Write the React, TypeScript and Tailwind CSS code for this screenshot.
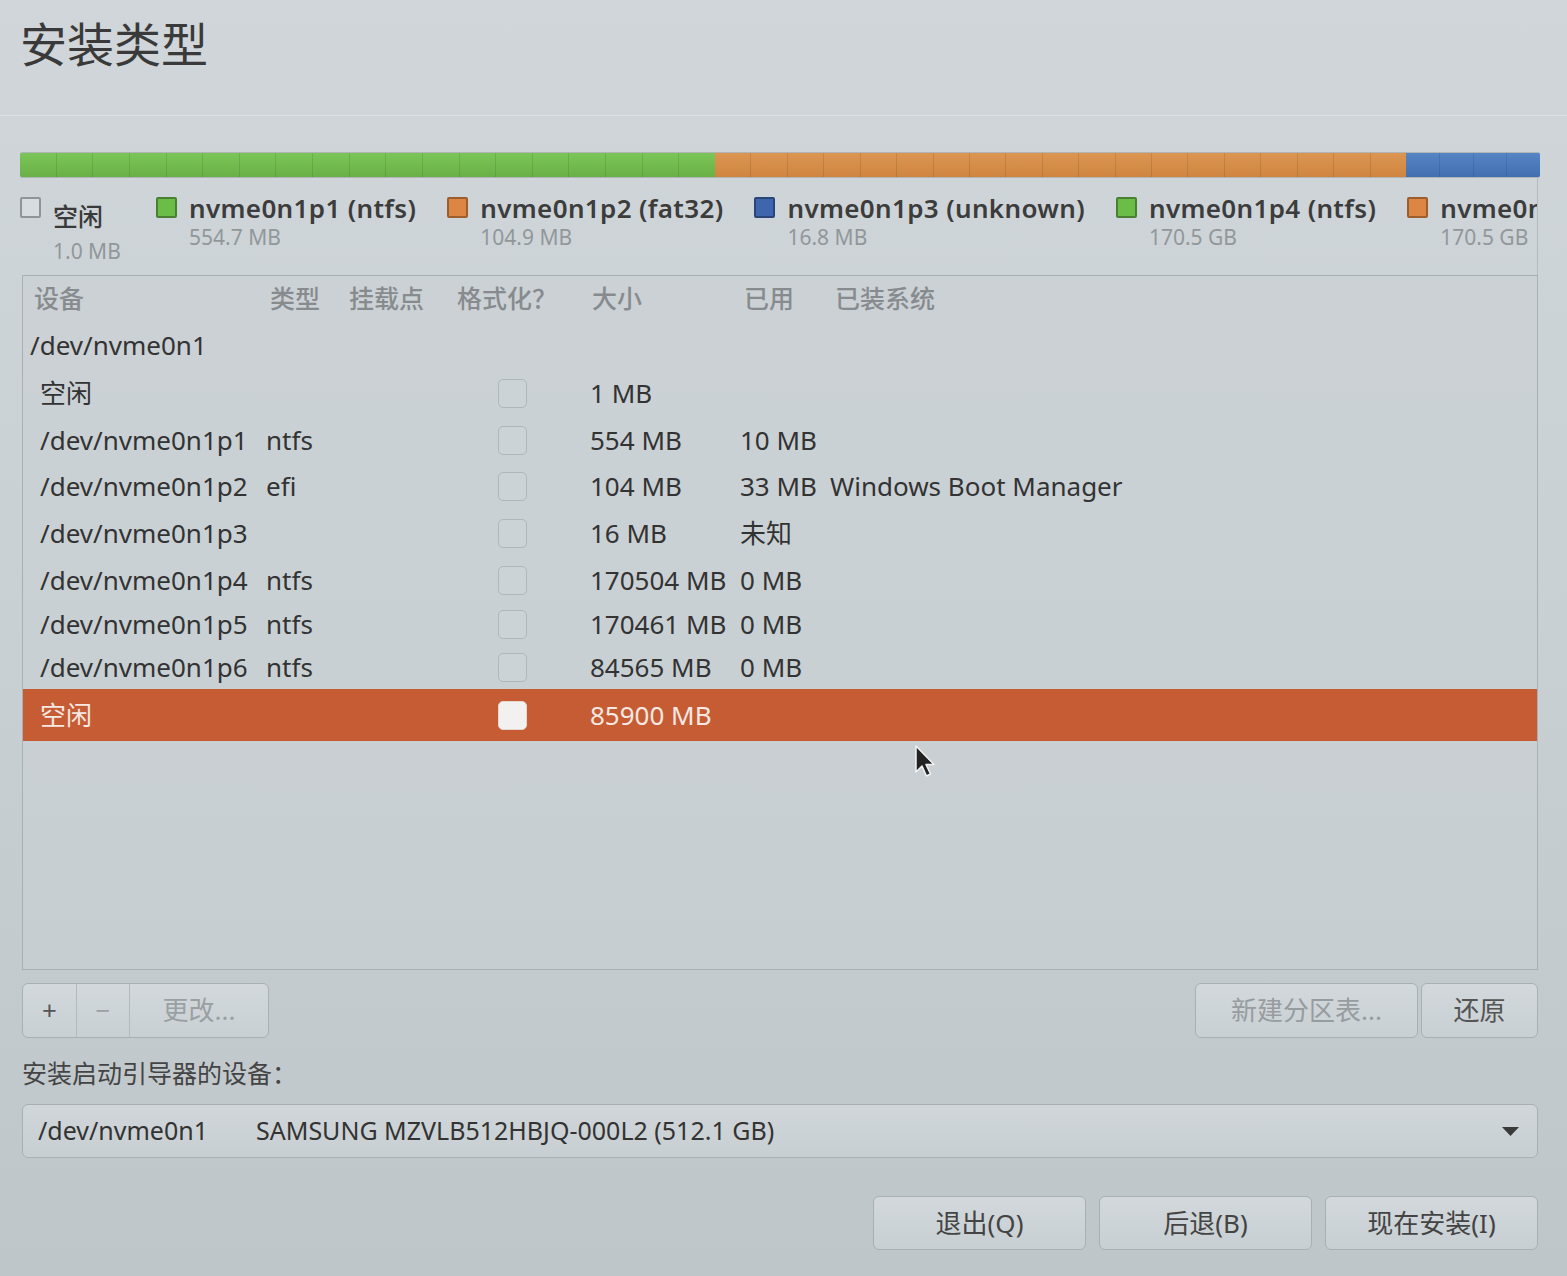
import React from 'react';

const FONT = { fontFamily: '"Noto Sans", "Noto Sans CJK SC", sans-serif' };

type Row = {
  dev: string;
  h: string;
  type?: string;
  cb?: boolean;
  size?: string;
  used?: string;
  sys?: string;
  disk?: boolean;
  selected?: boolean;
};

const rows: Row[] = [
  { dev: '/dev/nvme0n1', h: 'h-[47px]', disk: true },
  { dev: '空闲', h: 'h-[48px]', cb: true, size: '1 MB' },
  { dev: '/dev/nvme0n1p1', h: 'h-[47px]', type: 'ntfs', cb: true, size: '554 MB', used: '10 MB' },
  { dev: '/dev/nvme0n1p2', h: 'h-[45px]', type: 'efi', cb: true, size: '104 MB', used: '33 MB', sys: 'Windows Boot Manager' },
  { dev: '/dev/nvme0n1p3', h: 'h-[48px]', cb: true, size: '16 MB', used: '未知' },
  { dev: '/dev/nvme0n1p4', h: 'h-[46px]', type: 'ntfs', cb: true, size: '170504 MB', used: '0 MB' },
  { dev: '/dev/nvme0n1p5', h: 'h-[43px]', type: 'ntfs', cb: true, size: '170461 MB', used: '0 MB' },
  { dev: '/dev/nvme0n1p6', h: 'h-[43px]', type: 'ntfs', cb: true, size: '84565 MB', used: '0 MB' },
  { dev: '空闲', h: 'h-[52px]', cb: true, size: '85900 MB', selected: true },
];

const legend = [
  { name: 'nvme0n1p1 (ntfs)', size: '554.7 MB', sq: 'bg-[#6cbd48] border-[#4a8032]' },
  { name: 'nvme0n1p2 (fat32)', size: '104.9 MB', sq: 'bg-[#dd8544] border-[#9e5d2c]' },
  { name: 'nvme0n1p3 (unknown)', size: '16.8 MB', sq: 'bg-[#3f66ad] border-[#2a4678]' },
  { name: 'nvme0n1p4 (ntfs)', size: '170.5 GB', sq: 'bg-[#6cbd48] border-[#4a8032]' },
  { name: 'nvme0n1p5 (ntfs)', size: '170.5 GB', sq: 'bg-[#dd8544] border-[#9e5d2c]' },
];

function Segments({ n, cls }: { n: number; cls: string }) {
  return (
    <div className={`flex h-full ${cls}`}>
      {Array.from({ length: n }).map((_, i) => (
        <div key={i} className="flex-1 border-r border-black/10 last:border-r-0" />
      ))}
    </div>
  );
}

function Check({ on }: { on?: boolean }) {
  return (
    <div
      className={
        on
          ? 'w-[29px] h-[29px] rounded-[5px] bg-[#f3f1ef] border border-[#e6d6cf]'
          : 'w-[29px] h-[29px] rounded-[5px] bg-[#ccd3d6] border border-[#b0b7bb]'
      }
    />
  );
}

export default function App() {
  return (
    <div
      className="relative w-[1567px] h-[1276px] overflow-hidden bg-linear-to-b from-[#d0d6d9] via-[#c9d0d3] to-[#bfc6c9] text-[#333]"
      style={FONT}
    >
      {/* title */}
      <div className="h-[115px] pl-[20px] pt-[14px]">
        <div className="text-[47px] leading-[60px] text-[#3a3a3a]">安装类型</div>
      </div>
      <div className="h-px bg-[#dbe0e2]" />

      {/* partition bar */}
      <div className="mt-[36px] ml-[20px] w-[1520px] h-[26px] flex rounded-[2px] overflow-hidden border-y border-[#00000026]">
        <div className="w-[695px] h-full">
          <Segments n={19} cls="bg-linear-to-b from-[#7cc558] to-[#69b146]" />
        </div>
        <div className="w-[691px] h-full">
          <Segments n={19} cls="bg-linear-to-b from-[#dc9652] to-[#cf853f]" />
        </div>
        <div className="flex-1 h-full">
          <Segments n={4} cls="bg-linear-to-b from-[#5585c4] to-[#426fb0]" />
        </div>
      </div>

      {/* legend */}
      <div className="ml-[20px] w-[1518px] h-[97px] overflow-hidden border-r border-[#b4bbbf]">
        <div className="flex gap-[31px] pt-[19px] whitespace-nowrap">
          <div className="flex shrink-0">
            <div className="w-[21px] h-[21px] border-2 border-[#8e9498] bg-[#d6dcdf] rounded-[2px]" />
            <div className="ml-[12px] pt-[6px] min-w-[72px]">
              <div className="text-[25px] leading-[26px] font-medium text-[#3a3a3a]">空闲</div>
              <div className="mt-[9px] text-[21px] leading-[26px] text-[#92979a]">1.0 MB</div>
            </div>
          </div>
          {legend.map((l) => (
            <div key={l.name} className="flex shrink-0">
              <div className={`w-[21px] h-[21px] border-2 rounded-[2px] ${l.sq}`} />
              <div className="ml-[12px] -mt-[4px]">
                <div className="text-[26px] leading-[30px] font-semibold tracking-[0.35px] text-[#3c3c3c]">{l.name}</div>
                <div className="text-[21px] leading-[28px] text-[#92979a]">{l.size}</div>
              </div>
            </div>
          ))}
        </div>
      </div>

      {/* partition table */}
      <div className="ml-[22px] w-[1516px] h-[695px] border border-[#a9b0b4] bg-[#c9d0d3]/60 flex flex-col">
        <div className="h-[46px] flex items-center text-[25px] font-medium text-[#878b8e] whitespace-nowrap">
          <div className="w-[247px] pl-[11px]">设备</div>
          <div className="w-[79px]">类型</div>
          <div className="w-[108px]">挂载点</div>
          <div className="w-[135px]">格式化？</div>
          <div className="w-[152px]">大小</div>
          <div className="w-[91px]">已用</div>
          <div>已装系统</div>
        </div>
        {rows.map((r, i) => (
          <div
            key={i}
            className={`${r.h} flex items-center text-[26px] whitespace-nowrap ${
              r.selected ? 'bg-[#c65c34] text-[#f6e8e2]' : 'text-[#333]'
            }`}
          >
            {r.disk ? (
              <div className="pl-[7px]">{r.dev}</div>
            ) : (
              <>
                <div className="w-[243px] pl-[17px]">{r.dev}</div>
                <div className="w-[232px]">{r.type}</div>
                <div className="w-[92px]">{r.cb && <Check on={r.selected} />}</div>
                <div className="w-[150px]">{r.size}</div>
                <div className="w-[90px]">{r.used}</div>
                <div>{r.sys}</div>
              </>
            )}
          </div>
        ))}
      </div>

      {/* table buttons */}
      <div className="mt-[13px] ml-[22px] w-[1516px] h-[55px] flex justify-between">
        <div className="flex h-full rounded-[6px] border border-[#a9b0b4] bg-linear-to-b from-[#d2d8db] to-[#c9d0d3] text-[26px]">
          <div className="w-[54px] flex items-center justify-center text-[#555] border-r border-[#b3babe]">+</div>
          <div className="w-[53px] flex items-center justify-center text-[#9a9fa2] border-r border-[#b3babe]">−</div>
          <div className="w-[138px] flex items-center justify-center text-[#9a9fa2]">更改...</div>
        </div>
        <div className="flex gap-[3px] h-full">
          <div className="w-[223px] rounded-[6px] border border-[#a9b0b4] bg-linear-to-b from-[#d2d8db] to-[#c9d0d3] flex items-center justify-center text-[26px] text-[#979c9f]">
            新建分区表...
          </div>
          <div className="w-[117px] rounded-[6px] border border-[#a9b0b4] bg-linear-to-b from-[#d2d8db] to-[#c9d0d3] flex items-center justify-center text-[26px] text-[#555]">
            还原
          </div>
        </div>
      </div>

      {/* boot loader device */}
      <div className="mt-[20px] ml-[22px] h-[30px] text-[25px] leading-[30px] text-[#444]">安装启动引导器的设备：</div>
      <div className="mt-[16px] ml-[22px] w-[1516px] h-[54px] rounded-[6px] border border-[#a9b0b4] bg-linear-to-b from-[#d0d6d9] to-[#c8cfd2] flex items-center text-[25px] text-[#333] whitespace-nowrap">
        <div className="w-[233px] pl-[15px]">/dev/nvme0n1</div>
        <div className="flex-1">SAMSUNG MZVLB512HBJQ-000L2 (512.1 GB)</div>
        <svg width="17" height="9" viewBox="0 0 17 9" className="mr-[18px]">
          <path d="M0 0 H17 L8.5 9 Z" fill="#3a3a3a" />
        </svg>
      </div>

      {/* dialog buttons */}
      <div className="mt-[38px] w-[1538px] flex justify-end gap-[13px]">
        {['退出(Q)', '后退(B)', '现在安装(I)'].map((t) => (
          <div
            key={t}
            className="w-[213px] h-[54px] rounded-[6px] border border-[#a9b0b4] bg-linear-to-b from-[#d2d8db] to-[#c8cfd2] flex items-center justify-center text-[26px] text-[#444]"
          >
            {t}
          </div>
        ))}
      </div>

      {/* mouse pointer */}
      <svg
        className="absolute left-[914px] top-[744px]"
        width="24"
        height="36"
        viewBox="0 0 24 36"
      >
        <path
          d="M2 2 L2 28 L8 22 L12.5 32 L16.5 30 L12 20.5 L20 20.5 Z"
          fill="#222"
          stroke="#f2f2f2"
          strokeWidth="1.5"
          strokeLinejoin="round"
        />
      </svg>
    </div>
  );
}
